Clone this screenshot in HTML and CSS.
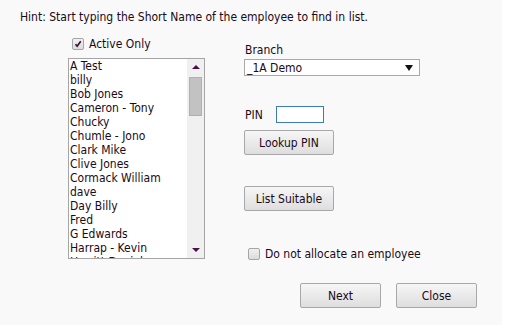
FILE: index.html
```html
<!DOCTYPE html>
<html>
<head>
<meta charset="utf-8">
<link rel="stylesheet" href="styles.css">
</head>
<body>
<div class="panel">
  <div class="hint">Hint: Start typing the Short Name of the employee to find in list.</div>
  <div class="main">
    <div class="left">
      <label class="check-row">
        <span class="cb checked"><svg width="12" height="12" viewBox="0 0 12 12"><path d="M3 6.2 L5 8.6 L9.3 2.8" fill="none" stroke="#3b0b35" stroke-width="2"/></svg></span>
        <span>Active Only</span>
      </label>
      <div class="listbox">
        <div class="items">
          <div>A Test</div>
          <div>billy</div>
          <div>Bob Jones</div>
          <div>Cameron - Tony</div>
          <div>Chucky</div>
          <div>Chumle - Jono</div>
          <div>Clark Mike</div>
          <div>Clive Jones</div>
          <div>Cormack William</div>
          <div>dave</div>
          <div>Day Billy</div>
          <div>Fred</div>
          <div>G Edwards</div>
          <div>Harrap - Kevin</div>
          <div>Hewitt Daniel</div>
        </div>
        <div class="scrollbar">
          <span class="arrow up"></span>
          <span class="thumb"></span>
          <span class="spacer"></span>
          <span class="arrow down"></span>
        </div>
      </div>
    </div>
    <div class="right">
      <div class="label">Branch</div>
      <div class="select"><span>_1A Demo</span><span class="sel-arrow"></span></div>
      <div class="pin-row"><span class="pin-label">PIN</span><span class="pin-input"></span></div>
      <button class="btn wide">Lookup PIN</button>
      <button class="btn wide suit">List Suitable</button>
      <label class="check-row noalloc">
        <span class="cb"></span>
        <span>Do not allocate an employee</span>
      </label>
    </div>
  </div>
  <div class="actions">
    <button class="btn narrow">Next</button>
    <button class="btn narrow">Close</button>
  </div>
</div>
</body>
</html>
```
FILE: styles.css
```css
* { box-sizing: border-box; }
html, body { margin: 0; padding: 0; background: #ffffff; }
body {
  font-family: "DejaVu Sans Condensed", "DejaVu Sans", sans-serif;
  font-size: 12px;
  color: #1a0a18;
}
.panel {
  width: 502px;
  height: 325px;
  background: #f9f9f9;
  padding: 10px 0 0 20px;
}
.hint { height: 14px; line-height: 14px; }
.main { display: flex; margin-top: 13px; }
.left { margin-left: 48px; width: 137px; }
.check-row { display: flex; align-items: center; gap: 5px; height: 14px; }
.left .check-row { margin-left: 4px; }
.cb {
  width: 12px; height: 12px;
  border: 1px solid #a6a6a6;
  border-radius: 2px;
  background: linear-gradient(#f0f0f0, #dcdcdc);
  display: flex; align-items: center; justify-content: center;
}
.cb svg { display: block; }
.listbox {
  margin-top: 7px;
  width: 137px;
  height: 201px;
  border: 1px solid #a5a5a5;
  background: #fff;
  display: flex;
  overflow: hidden;
}
.items { flex: 1; padding-left: 1px; line-height: 14px; overflow: hidden; }
.items div { height: 14px; white-space: nowrap; }
.scrollbar {
  width: 17px;
  background: #f0f0f0;
  display: flex;
  flex-direction: column;
  align-items: center;
  padding: 6px 0 6px;
}
.arrow { width: 0; height: 0; border-left: 4px solid transparent; border-right: 4px solid transparent; }
.arrow.up { border-bottom: 4px solid #4a0f48; }
.arrow.down { border-top: 4px solid #4a0f48; }
.thumb {
  margin-top: 8px;
  width: 13px; height: 39px;
  background: #c2c2c2;
  border: 1px solid #b0b0b0;
}
.spacer { flex: 1; }
.right { margin-left: 39px; display: flex; flex-direction: column; align-items: flex-start; }
.label { margin-top: 6px; height: 14px; line-height: 14px; padding-left: 1px; }
.select {
  margin-top: 2px;
  width: 176px; height: 17px;
  border: 1px solid #a9a9a9;
  background: #fff;
  display: flex; align-items: center; justify-content: space-between;
  padding: 0 6px 0 2px;
}
.sel-arrow { width: 0; height: 0; border-left: 4px solid transparent; border-right: 4px solid transparent; border-top: 6px solid #111; }
.pin-row { margin-top: 30px; display: flex; align-items: center; padding-left: 1px; }
.pin-label { width: 31px; }
.pin-input { width: 48px; height: 17px; border: 1px solid #3d7bb5; background: #fff; }
.btn {
  font-family: inherit; font-size: 12px; color: inherit;
  height: 25px;
  border: 1px solid #a8a8a8;
  border-radius: 2px;
  background: linear-gradient(#f6f6f6, #dedede);
  padding: 0;
}
.wide { width: 90px; margin-top: 7px; }
.suit { margin-top: 31px; }
.noalloc { margin-top: 36px; margin-left: 4px; }
.actions { display: flex; gap: 15px; margin-top: 22px; padding-left: 280px; }
.narrow { width: 81px; }
```
